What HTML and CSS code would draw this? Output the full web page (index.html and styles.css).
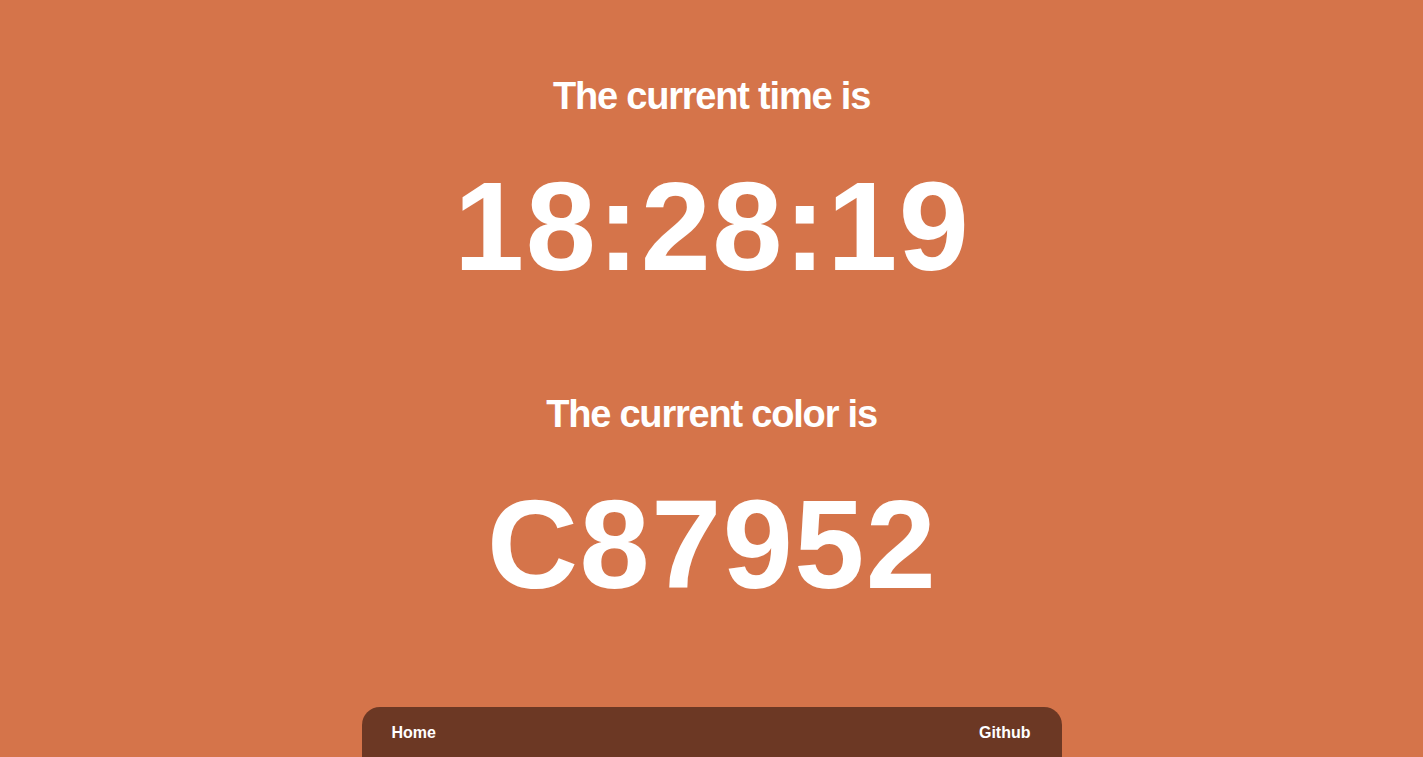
FILE: index.html
```html
<!DOCTYPE html>
<html lang="en">
<head>
<meta charset="utf-8">
<title>Color Clock</title>
<link rel="stylesheet" href="styles.css">
</head>
<body>
<div class="page">
  <main class="content">
    <section class="block">
      <h2 class="label">The current time is</h2>
      <div class="value">18:28:19</div>
    </section>
    <section class="block">
      <h2 class="label">The current color is</h2>
      <div class="value">C87952</div>
    </section>
  </main>
  <nav class="nav">
    <a class="nav-link" href="#">Home</a>
    <a class="nav-link" href="#">Github</a>
  </nav>
</div>
</body>
</html>
```

FILE: styles.css
```css
html, body {
  margin: 0;
  padding: 0;
  height: 100%;
}

body {
  background: #d5744a;
  color: #ffffff;
  font-family: "Liberation Sans", Arial, sans-serif;
  font-weight: bold;
}

.page {
  min-height: 100vh;
  display: flex;
  flex-direction: column;
  align-items: center;
}

.content {
  flex: 1;
  display: flex;
  flex-direction: column;
  align-items: center;
  gap: 105px;
  padding-top: 77px;
}

.block {
  display: flex;
  flex-direction: column;
  align-items: center;
  gap: 49px;
}

.label {
  margin: 0;
  font-size: 38px;
  line-height: 1;
  letter-spacing: -1.2px;
  font-weight: bold;
}

.value {
  font-size: 126px;
  line-height: 1;
  font-weight: bold;
  letter-spacing: 1.5px;
  text-indent: 1.5px;
}

.nav {
  width: 700px;
  height: 50px;
  box-sizing: border-box;
  background: #6c3824;
  border-radius: 18px 18px 0 0;
  display: flex;
  align-items: center;
  justify-content: space-between;
  padding: 2px 31px 0 30px;
}

.nav-link {
  color: #ffffff;
  text-decoration: none;
  font-size: 16px;
  font-weight: bold;
}
```
